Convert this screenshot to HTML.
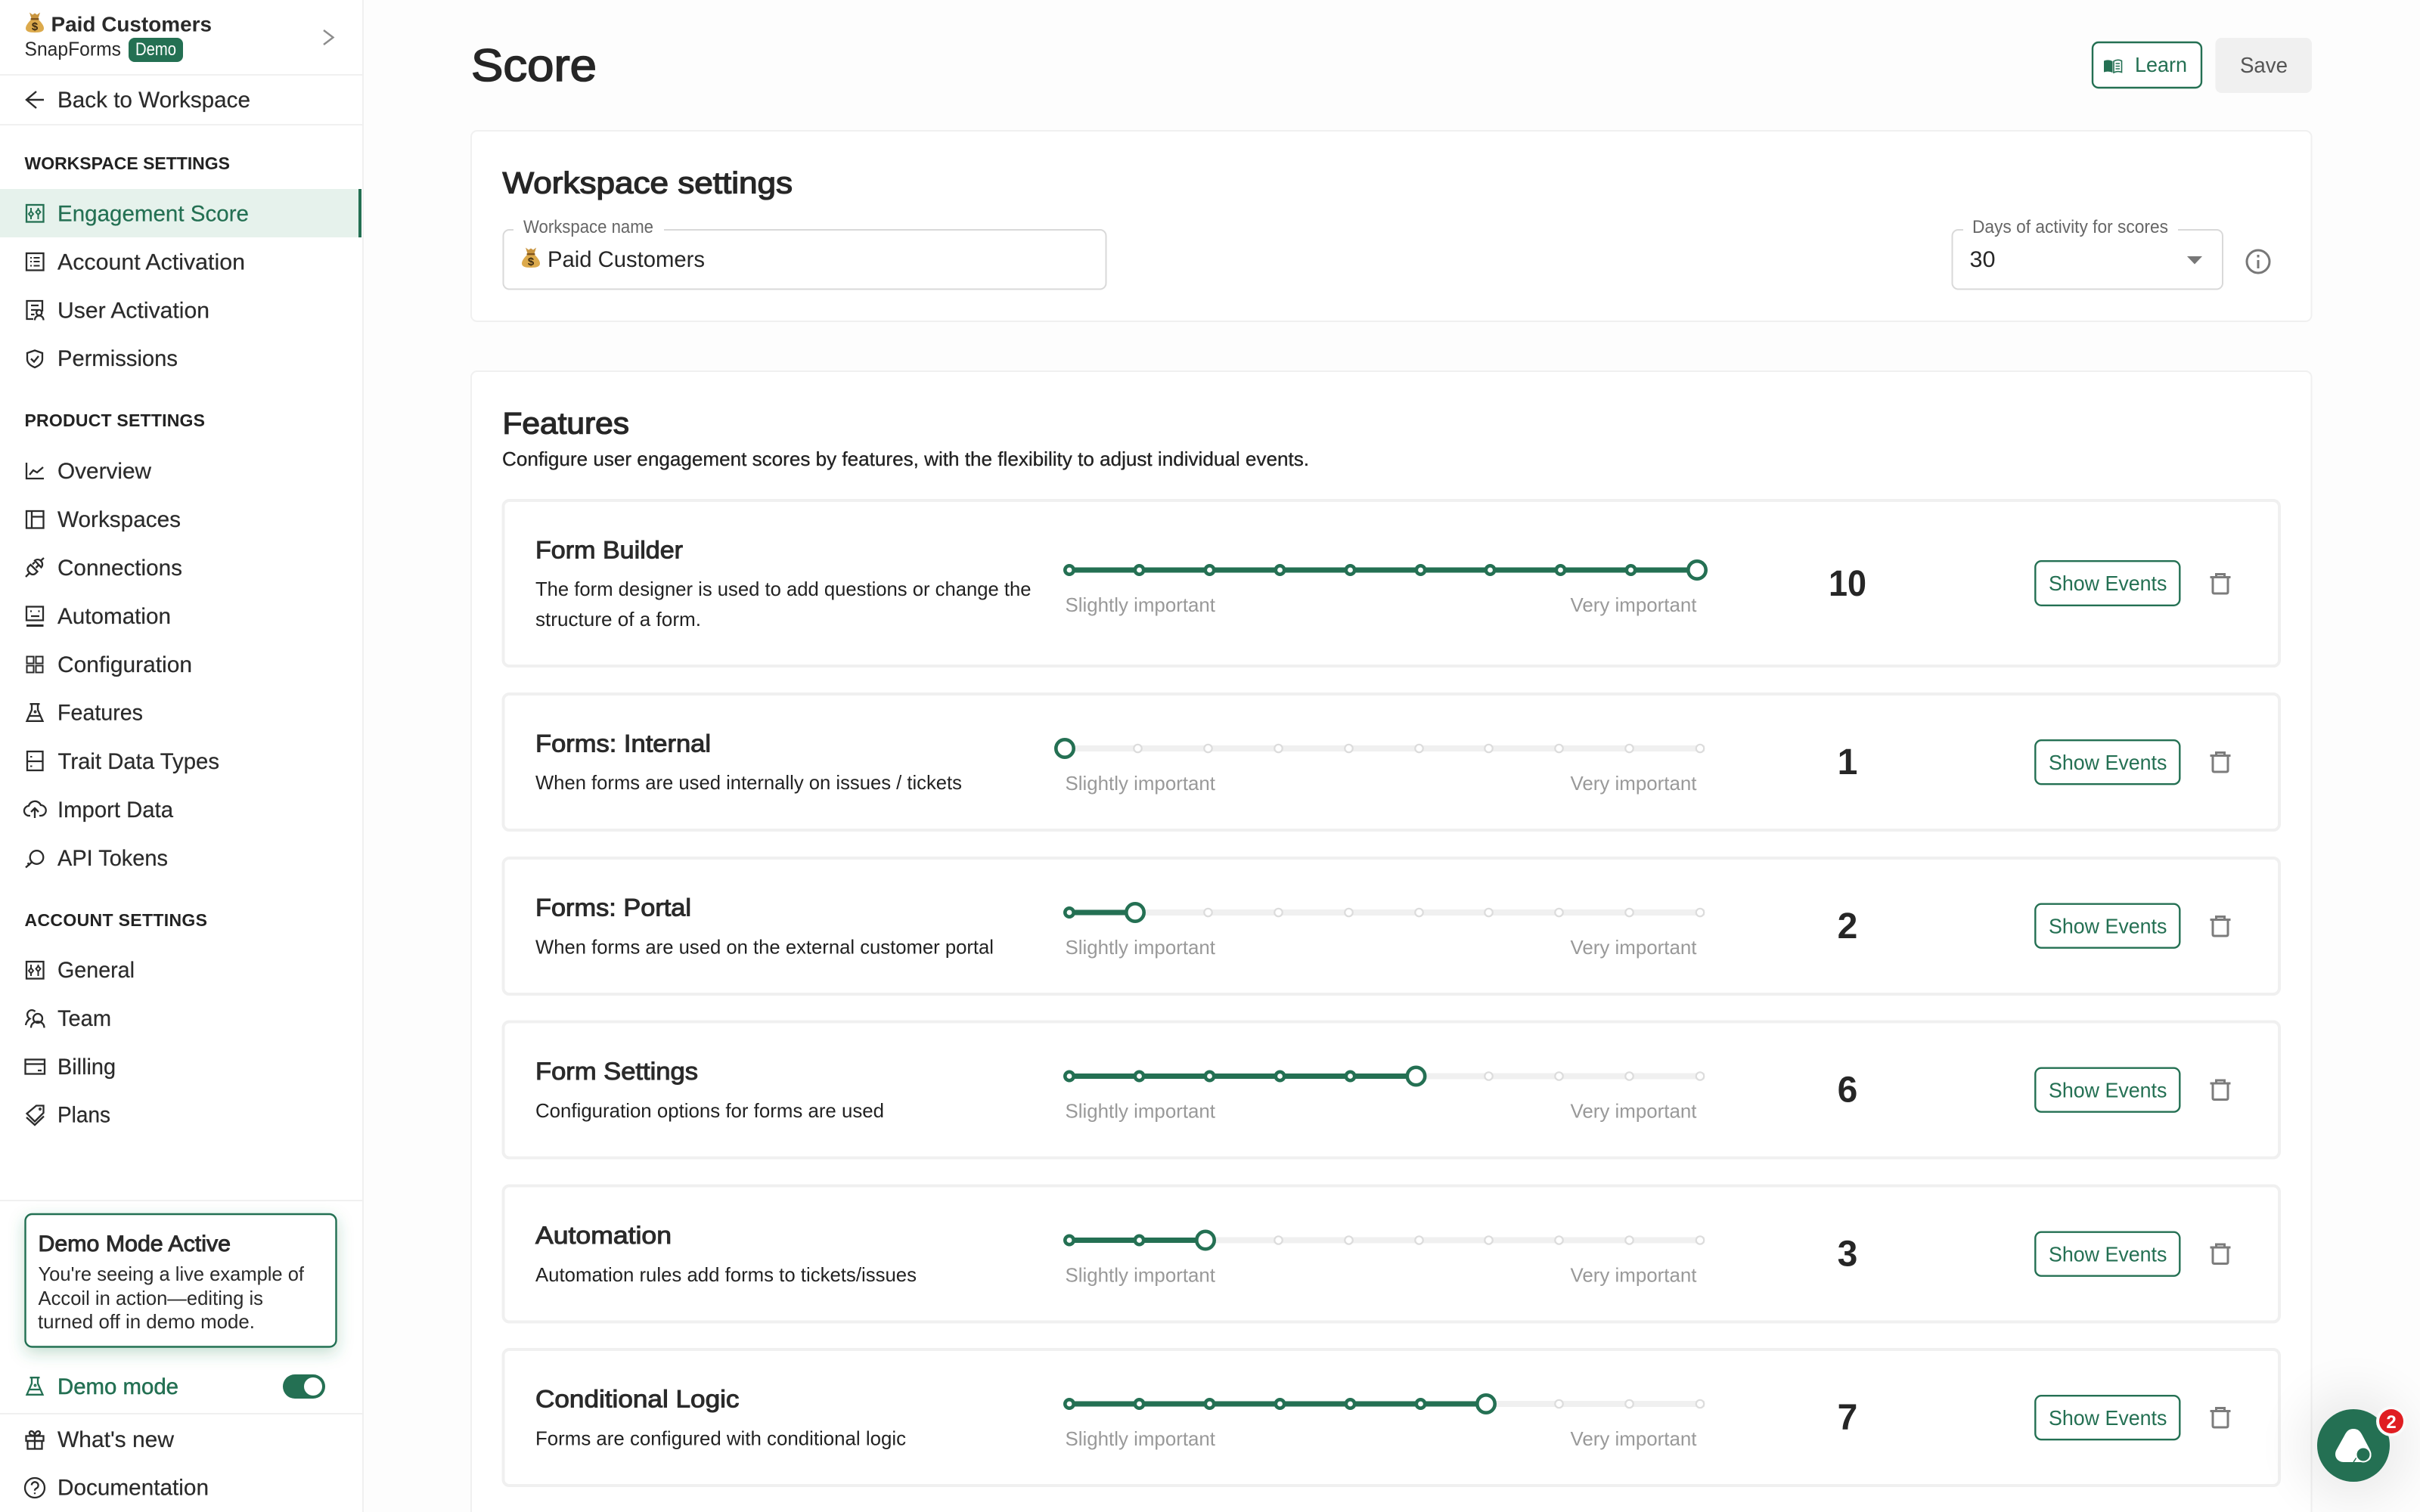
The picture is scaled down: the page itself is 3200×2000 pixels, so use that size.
<!DOCTYPE html>
<html lang="en">
<head>
<meta charset="utf-8">
<title>Score</title>
<style>
html,body{margin:0;padding:0;background:#fdfdfd;width:3200px;height:2000px;overflow:hidden}
svg{display:block}
text{font-family:"Liberation Sans",sans-serif;fill:#2a2a2a;font-size:30px}
.nav{font-size:30px;fill:#2b2b2b;stroke:#2b2b2b;stroke-width:.2px}
.hd{font-size:23px;font-weight:700;fill:#222}
.h1{font-size:60px;fill:#262626;stroke:#262626;stroke-width:1.6px}
.h2{font-size:40px;fill:#262626;stroke:#262626;stroke-width:1.3px}
.tt{font-size:32px;fill:#2a2a2a;stroke:#2a2a2a;stroke-width:1px}
.d{font-size:26px;fill:#222}
.lb{font-size:26px;fill:#999}
.fl{font-size:24px;fill:#666}
.n{font-size:48px;font-weight:700;fill:#262626;text-anchor:middle}
.se{font-size:28px;fill:#247053}
.ic{fill:none;stroke:currentColor;stroke-width:2.3}
.row{fill:#fff;stroke:#f0f0f0;stroke-width:4}
.btn{fill:#fff;stroke:#247053;stroke-width:2.4}
.tr{fill:none;stroke:#7c7c7c;stroke-width:3}
.trk{fill:#f0f0f0}
.act{fill:#247053}
</style>
</head>
<body>
<svg xmlns="http://www.w3.org/2000/svg" width="3200" height="2000" viewBox="0 0 3200 2000">
<defs>
<filter id="b" x="-100%" y="-100%" width="300%" height="300%"><feGaussianBlur stdDeviation="32"/></filter>
<filter id="ds" x="-20%" y="-30%" width="140%" height="170%"><feDropShadow dx="0" dy="7" stdDeviation="10" flood-color="#2a8a5a" flood-opacity=".28"/></filter>
<circle id="da" r="5.7" fill="#fff" stroke="#247053" stroke-width="4.6"/>
<circle id="di" r="5.2" fill="#fff" stroke="#dcdcdc" stroke-width="2.2"/>
<circle id="th" r="11.7" fill="#fff" stroke="#247053" stroke-width="4.6"/>
<g id="trash" class="tr"><path d="M0 5.5H27"/><path d="M8 5V1.5H19V5"/><path d="M3.5 6V25Q3.5 27 5.5 27H21.5Q23.5 27 23.5 25V6"/></g>
<g id="eq" class="ic"><rect x="35" y="271" width="22.5" height="22.5"/><path d="M41 275V279M41 287V290M50.5 275V277M50.5 284V290" stroke-width="2"/><path d="M41 279.5L44 283L41 286.5L38 283ZM50.5 277L53.5 280.5L50.5 284L47.5 280.5Z" stroke-width="2"/></g>
<g id="flask" class="ic"><path d="M39.5 1.2H52.5M42 1.2V9L35.5 23.8H56.5L50 9V1.2"/><path d="M38.5 17H53.5"/><circle cx="46.5" cy="11.5" r=".8"/></g>
<g id="bag">
<path d="M6 9C2 13 -1 17 -1 20.500C-1 24.500 3 26 11 26C19 26 23 24.500 23 20.500C23 17 20 13 16 9Z" fill="#dcaa4c"/>
<path d="M4 -0.500L8 2.500L11 0.500L14 2.500L18 -0.500L15.500 7.500H6.500Z" fill="#c9953f"/>
<rect x="5.500" y="7" width="11" height="2.400" rx="1" fill="#80561f"/>
</g>
<g id="inact">
<use href="#di" x="1597.5"/><use href="#di" x="1690.5"/><use href="#di" x="1783.5"/><use href="#di" x="1876.5"/><use href="#di" x="1968.5"/><use href="#di" x="2061.5"/><use href="#di" x="2154.5"/><use href="#di" x="2248"/>
</g>
</defs>

<!-- main background -->
<rect x="0" y="0" width="3200" height="2000" fill="#fdfdfd"/>

<!-- sidebar -->
<rect x="0" y="0" width="479" height="2000" fill="#fff"/>
<rect x="479" y="0" width="2" height="2000" fill="#f0f0f0"/>

<g transform="translate(35,17)">
<use href="#bag"/>
<text x="11" y="23" text-anchor="middle" style="font-size:15px;font-weight:700;fill:#3d2b10">$</text>
</g>
<text x="67.500" y="41.500" textLength="212.500" lengthAdjust="spacingAndGlyphs" style="font-size:28px;font-weight:700;fill:#2a2a2a">Paid Customers</text>
<text x="32.500" y="73.500" textLength="127.500" lengthAdjust="spacingAndGlyphs" style="font-size:26px;fill:#2a2a2a">SnapForms</text>
<rect x="170" y="50" width="72" height="32" rx="8" fill="#247053"/>
<text x="179" y="73" textLength="54" lengthAdjust="spacingAndGlyphs" style="font-size:24px;fill:#fff">Demo</text>
<path d="M428 40L440.500 49.500L428 59" fill="none" stroke="#8c8c8c" stroke-width="2.400"/>
<rect x="0" y="98" width="479" height="2" fill="#f0f0f0"/>
<path d="M48 121L35 132L48 143M35 132H58" fill="none" stroke="#2b2b2b" stroke-width="2.400"/>
<text class="nav" x="76" y="142" textLength="255" lengthAdjust="spacingAndGlyphs">Back to Workspace</text>
<rect x="0" y="164" width="479" height="2" fill="#f0f0f0"/>

<text class="hd" x="32.500" y="224" textLength="271.500" lengthAdjust="spacing">WORKSPACE SETTINGS</text>

<rect x="0" y="250" width="478" height="64" fill="#e6f2ec"/>
<rect x="474" y="250" width="4" height="64" fill="#247053"/>
<g style="color:#247053"><use href="#eq"/></g>
<text class="nav" x="76" y="292.500" textLength="253" lengthAdjust="spacingAndGlyphs" style="fill:#247053;stroke:#247053">Engagement Score</text>

<g class="ic" style="color:#2b2b2b">
<rect x="35" y="335" width="22.500" height="22.500"/>
<path d="M40 341H42M40 346H42M40 351.500H42M44.500 341H52.500M44.500 346H52.500M44.500 351.500H52.500" stroke-width="2"/>
<path d="M56 412V398H35.500V422H44M41 404H51M41 410H51M41 416H45.500"/>
<circle cx="51.700" cy="413.500" r="3.600"/><path d="M46 423.500C46 415.500 57.500 415.500 57.500 423.500"/>
<path d="M46 463.500L56 467V475C56 481 51 484 46 486C41 484 36 481 36 475V467Z"/><path d="M41 474.500L45 478.500L51 471"/>
<path d="M35 612V633H58M39 628L44 622L49 625L57 618"/>
<rect x="35" y="676" width="22.500" height="22.500"/><path d="M42 676V698M42 683.500H57.500"/>
<path d="M34 763L38.500 758.500M53 742.500L58 738M40.500 747L49.500 756L47 758.500A5 5 0 0 1 40 758.500L38 756.500A5 5 0 0 1 38 749.500ZM46 741.500L54.500 750.500A6 6 0 0 0 54.500 742.500L53 741A6 6 0 0 0 46 741.500ZM43 746.500L46 743.500M47.500 751L50.500 748"/>
<rect x="35" y="802.500" width="22" height="18"/><path d="M40 808.500H42M50.500 808.500H52.500M41 815H52"/><path d="M35 827.500H57.500" stroke-width="3"/>
<g stroke-width="2"><rect x="35.500" y="868.500" width="9" height="9"/><rect x="47.500" y="868.500" width="9" height="9"/><rect x="35.500" y="880.500" width="9" height="9"/><rect x="47.500" y="880.500" width="9" height="9"/></g>
<rect x="36" y="994" width="20.500" height="25"/><path d="M36 1007H56.500"/><path d="M40 1001H42.500M40 1013.500H42.500" stroke-width="2"/>
<path d="M40 1079H39A6.500 6.500 0 0 1 38 1066A8.500 8.500 0 0 1 54 1065A7 7 0 0 1 53.500 1079H52M46 1082V1069M41 1074L46 1069L51 1074"/>
<circle cx="48.500" cy="1134" r="8.800"/><path d="M42 1140.500L34 1147.500M36.500 1141.500L39.500 1144.500"/>
<use href="#eq" y="1001"/>
<circle cx="50" cy="1347" r="6"/><path d="M41 1359.500C41 1348.500 58.500 1348.500 58.500 1359.500M46.500 1338A6 6 0 1 0 39.500 1347.500C36.500 1349.500 34.500 1352.500 34 1356"/>
<rect x="33.500" y="1401.500" width="25.500" height="19"/><path d="M33.500 1407.500H59"/><path d="M50 1416H55"/>
<path d="M48 1462.500H57.500V1472L46 1483.500L35.500 1473ZM35 1478L46 1488L58 1476.500"/><circle cx="53" cy="1467" r=".8"/>
</g>

<text class="nav" x="76" y="356.500" textLength="248" lengthAdjust="spacingAndGlyphs">Account Activation</text>
<text class="nav" x="76" y="420.500" textLength="201" lengthAdjust="spacingAndGlyphs">User Activation</text>
<text class="nav" x="76" y="484" textLength="159" lengthAdjust="spacingAndGlyphs">Permissions</text>

<text class="hd" x="32.500" y="564" textLength="238.500" lengthAdjust="spacing">PRODUCT SETTINGS</text>
<text class="nav" x="76" y="633" textLength="124" lengthAdjust="spacingAndGlyphs">Overview</text>
<text class="nav" x="76" y="697" textLength="163" lengthAdjust="spacingAndGlyphs">Workspaces</text>
<text class="nav" x="76" y="761" textLength="165" lengthAdjust="spacingAndGlyphs">Connections</text>
<text class="nav" x="76" y="825" textLength="150" lengthAdjust="spacingAndGlyphs">Automation</text>
<text class="nav" x="76" y="889" textLength="178" lengthAdjust="spacingAndGlyphs">Configuration</text>
<g style="color:#2b2b2b"><use href="#flask" y="930"/></g>
<text class="nav" x="76" y="952.500" textLength="113" lengthAdjust="spacingAndGlyphs">Features</text>
<text class="nav" x="76.500" y="1017" textLength="213.500" lengthAdjust="spacingAndGlyphs">Trait Data Types</text>
<text class="nav" x="76" y="1081" textLength="153" lengthAdjust="spacingAndGlyphs">Import Data</text>
<text class="nav" x="76" y="1145" textLength="146" lengthAdjust="spacingAndGlyphs">API Tokens</text>

<text class="hd" x="32.500" y="1225" textLength="241.500" lengthAdjust="spacing">ACCOUNT SETTINGS</text>
<text class="nav" x="76" y="1293" textLength="102" lengthAdjust="spacingAndGlyphs">General</text>
<text class="nav" x="76" y="1357" textLength="71" lengthAdjust="spacingAndGlyphs">Team</text>
<text class="nav" x="76" y="1421" textLength="77" lengthAdjust="spacingAndGlyphs">Billing</text>
<text class="nav" x="76" y="1484.500" textLength="70" lengthAdjust="spacingAndGlyphs">Plans</text>

<rect x="0" y="1587" width="479" height="2" fill="#f0f0f0"/>
<rect x="33.500" y="1606" width="411" height="175.500" rx="9" fill="#fff" stroke="#247053" stroke-width="2.400" filter="url(#ds)"/>
<text x="50.500" y="1655" textLength="254.500" lengthAdjust="spacingAndGlyphs" style="font-size:30px;fill:#2a2a2a;stroke:#2a2a2a;stroke-width:1px">Demo Mode Active</text>
<text class="d" x="50.500" y="1694" textLength="351.500" lengthAdjust="spacingAndGlyphs" style="fill:#2b2b2b">You're seeing a live example of</text>
<text class="d" x="50.500" y="1726" textLength="297.500" lengthAdjust="spacingAndGlyphs" style="fill:#2b2b2b">Accoil in action—editing is</text>
<text class="d" x="50" y="1757" textLength="287" lengthAdjust="spacingAndGlyphs" style="fill:#2b2b2b">turned off in demo mode.</text>

<g style="color:#247053"><use href="#flask" y="1821"/></g>
<text x="76" y="1844" textLength="160" lengthAdjust="spacingAndGlyphs" style="font-size:30px;fill:#247053;stroke:#247053;stroke-width:.5px">Demo mode</text>
<rect x="374" y="1818" width="56" height="32" rx="16" fill="#247053"/>
<circle cx="414" cy="1834" r="12" fill="#fff"/>
<rect x="0" y="1869" width="479" height="2" fill="#f0f0f0"/>

<g class="ic" style="color:#2b2b2b">
<rect x="34.500" y="1899.500" width="23" height="6.500"/><rect x="36.500" y="1906" width="19" height="10.500"/><path d="M46 1899.500V1916.500"/>
<path d="M46 1899C42 1899 39 1898 39 1895.500C39 1892 45 1891.500 46 1899C47 1891.500 53 1892 53 1895.500C53 1898 50 1899 46 1899Z"/>
<circle cx="46" cy="1968" r="13"/><path d="M41.800 1964.500A4.400 4.400 0 1 1 48.500 1968.500C46.800 1969.500 46 1970 46 1971.800"/><path d="M46 1974.300V1976.300"/>
</g>
<text class="nav" x="76" y="1914" textLength="154" lengthAdjust="spacingAndGlyphs">What's new</text>
<text class="nav" x="76" y="1977.500" textLength="200" lengthAdjust="spacingAndGlyphs">Documentation</text>

<!-- page header -->
<text class="h1" x="623" y="107" textLength="166" lengthAdjust="spacingAndGlyphs">Score</text>
<rect x="2767" y="56" width="144" height="60" rx="8" class="btn"/>
<path d="M2782 80.500Q2788 78 2793.500 81V96Q2788 93.500 2782 95.500Z" fill="#247053"/>
<path d="M2795 81Q2800 78 2805.500 80.500V95.500Q2800 93.500 2795 96ZM2797.500 84H2803M2797.500 87.500H2803M2797.500 91H2803" fill="none" stroke="#247053" stroke-width="1.600"/>
<text class="se" x="2823" y="95" textLength="69" lengthAdjust="spacingAndGlyphs" style="font-size:28px">Learn</text>
<rect x="2929.500" y="50" width="127.500" height="73" rx="8" fill="#f0f0f0"/>
<text x="2962" y="96" textLength="63" lengthAdjust="spacingAndGlyphs" style="font-size:29px;fill:#555">Save</text>

<!-- workspace settings card -->
<rect x="623" y="173" width="2433.500" height="252" rx="8" fill="#fff" stroke="#f0f0f0" stroke-width="2"/>
<text class="h2" x="664.500" y="255.500" textLength="383.500" lengthAdjust="spacingAndGlyphs">Workspace settings</text>

<rect x="665.500" y="304" width="797" height="78.500" rx="8" fill="#fff" stroke="#d9d9d9" stroke-width="2"/>
<rect x="679" y="298" width="199" height="10" fill="#fff"/>
<text class="fl" x="692" y="308" textLength="172" lengthAdjust="spacingAndGlyphs">Workspace name</text>
<g transform="translate(691,328)">
<use href="#bag"/>
<text x="11" y="23" text-anchor="middle" style="font-size:15px;font-weight:700;fill:#3d2b10">$</text>
</g>
<text x="724" y="353" textLength="208" lengthAdjust="spacingAndGlyphs" style="font-size:30px;fill:#262626">Paid Customers</text>

<rect x="2581.500" y="304" width="357.500" height="78.500" rx="8" fill="#fff" stroke="#d9d9d9" stroke-width="2"/>
<rect x="2596" y="298" width="284" height="10" fill="#fff"/>
<text class="fl" x="2608" y="308" textLength="259" lengthAdjust="spacingAndGlyphs">Days of activity for scores</text>
<text x="2604.500" y="353" textLength="34" lengthAdjust="spacingAndGlyphs" style="font-size:30px;fill:#262626">30</text>
<path d="M2892 339H2912L2902 349.500Z" fill="#777"/>
<circle cx="2986" cy="346" r="15" fill="none" stroke="#777" stroke-width="3"/>
<path d="M2986 344V355M2986 337V340.500" stroke="#777" stroke-width="3" fill="none"/>

<!-- features card -->
<rect x="623" y="491" width="2433.500" height="1530" rx="8" fill="#fff" stroke="#f0f0f0" stroke-width="2"/>
<text class="h2" x="664.500" y="573.500" textLength="167.500" lengthAdjust="spacingAndGlyphs">Features</text>
<text x="664" y="616" textLength="1067" lengthAdjust="spacingAndGlyphs" style="font-size:26px;fill:#222;stroke:#222;stroke-width:.3px">Configure user engagement scores by features, with the flexibility to adjust individual events.</text>

<!-- row 1 -->
<g transform="translate(0,660)">
<rect class="row" x="665.500" y="2" width="2348.500" height="219" rx="8"/>
<text class="tt" x="708" y="78.500" textLength="195" lengthAdjust="spacingAndGlyphs">Form Builder</text>
<text class="d" x="708" y="128" textLength="655.500" lengthAdjust="spacingAndGlyphs">The form designer is used to add questions or change the</text>
<text class="d" x="708" y="168" textLength="219" lengthAdjust="spacingAndGlyphs">structure of a form.</text>
<rect class="act" x="1414" y="90.500" width="830" height="7"/>
<g transform="translate(0,94)">
<use href="#da" x="1414"/><use href="#da" x="1506.500"/><use href="#da" x="1599.500"/><use href="#da" x="1692.500"/><use href="#da" x="1785.500"/><use href="#da" x="1878.500"/><use href="#da" x="1970.500"/><use href="#da" x="2063.500"/><use href="#da" x="2156.500"/><use href="#th" x="2244"/>
</g>
<text class="lb" x="1408.500" y="149" textLength="198.500" lengthAdjust="spacingAndGlyphs">Slightly important</text>
<text class="lb" x="2076.500" y="149" textLength="167" lengthAdjust="spacingAndGlyphs">Very important</text>
<text class="n" x="2418" y="128" textLength="50" lengthAdjust="spacingAndGlyphs" style="text-anchor:start">10</text>
<rect class="btn" x="2691.300" y="82.200" width="191" height="58.600" rx="8"/>
<text class="se" x="2709" y="121" textLength="156.400" lengthAdjust="spacingAndGlyphs">Show Events</text>
<use href="#trash" x="2922.500" y="98"/>
</g>

<!-- row 2 -->
<g transform="translate(0,916)">
<rect class="row" x="665.500" y="2" width="2348.500" height="180" rx="8"/>
<text class="tt" x="708" y="78.500" textLength="232" lengthAdjust="spacingAndGlyphs">Forms: Internal</text>
<text class="d" x="708" y="128" textLength="564" lengthAdjust="spacingAndGlyphs">When forms are used internally on issues / tickets</text>
<rect class="trk" x="1408" y="70" width="846" height="8"/>
<g transform="translate(0,74)"><use href="#di" x="1504.500"/><use href="#inact"/><use href="#th" x="1408"/></g>
<text class="lb" x="1408.500" y="129" textLength="198.500" lengthAdjust="spacingAndGlyphs">Slightly important</text>
<text class="lb" x="2076.500" y="129" textLength="167" lengthAdjust="spacingAndGlyphs">Very important</text>
<text class="n" x="2443" y="108">1</text>
<rect class="btn" x="2691.300" y="63.200" width="191" height="58" rx="8"/>
<text class="se" x="2709" y="102" textLength="156.400" lengthAdjust="spacingAndGlyphs">Show Events</text>
<use href="#trash" x="2922.500" y="78"/>
</g>

<!-- row 3 -->
<g transform="translate(0,1133)">
<rect class="row" x="665.500" y="2" width="2348.500" height="180" rx="8"/>
<text class="tt" x="708" y="78.500" textLength="206" lengthAdjust="spacingAndGlyphs">Forms: Portal</text>
<text class="d" x="708" y="128.500" textLength="606" lengthAdjust="spacingAndGlyphs">When forms are used on the external customer portal</text>
<rect class="trk" x="1408" y="70" width="846" height="8"/>
<rect class="act" x="1414" y="70.500" width="87" height="7"/>
<g transform="translate(0,74)"><use href="#inact"/><use href="#da" x="1414"/><use href="#th" x="1501"/></g>
<text class="lb" x="1408.500" y="129" textLength="198.500" lengthAdjust="spacingAndGlyphs">Slightly important</text>
<text class="lb" x="2076.500" y="129" textLength="167" lengthAdjust="spacingAndGlyphs">Very important</text>
<text class="n" x="2443" y="108">2</text>
<rect class="btn" x="2691.300" y="62.700" width="191" height="58" rx="8"/>
<text class="se" x="2709" y="101.500" textLength="156.400" lengthAdjust="spacingAndGlyphs">Show Events</text>
<use href="#trash" x="2922.500" y="78"/>
</g>

<!-- row 4 -->
<g transform="translate(0,1349.500)">
<rect class="row" x="665.500" y="2" width="2348.500" height="180" rx="8"/>
<text class="tt" x="708" y="78.500" textLength="215" lengthAdjust="spacingAndGlyphs">Form Settings</text>
<text class="d" x="708" y="128.500" textLength="461" lengthAdjust="spacingAndGlyphs">Configuration options for forms are used</text>
<rect class="trk" x="1408" y="70" width="846" height="8"/>
<rect class="act" x="1414" y="70.500" width="458" height="7"/>
<g transform="translate(0,74)"><use href="#di" x="1968.500"/><use href="#di" x="2061.500"/><use href="#di" x="2154.500"/><use href="#di" x="2248"/><use href="#da" x="1414"/><use href="#da" x="1506.500"/><use href="#da" x="1599.500"/><use href="#da" x="1692.500"/><use href="#da" x="1785.500"/><use href="#th" x="1872.500"/></g>
<text class="lb" x="1408.500" y="129" textLength="198.500" lengthAdjust="spacingAndGlyphs">Slightly important</text>
<text class="lb" x="2076.500" y="129" textLength="167" lengthAdjust="spacingAndGlyphs">Very important</text>
<text class="n" x="2443" y="108">6</text>
<rect class="btn" x="2691.300" y="63.200" width="191" height="58" rx="8"/>
<text class="se" x="2709" y="102" textLength="156.400" lengthAdjust="spacingAndGlyphs">Show Events</text>
<use href="#trash" x="2922.500" y="78"/>
</g>

<!-- row 5 -->
<g transform="translate(0,1566.500)">
<rect class="row" x="665.500" y="2" width="2348.500" height="180" rx="8"/>
<text class="tt" x="708" y="78.500" textLength="180" lengthAdjust="spacingAndGlyphs">Automation</text>
<text class="d" x="708" y="128.500" textLength="504" lengthAdjust="spacingAndGlyphs">Automation rules add forms to tickets/issues</text>
<rect class="trk" x="1408" y="70" width="846" height="8"/>
<rect class="act" x="1414" y="70.500" width="180" height="7"/>
<g transform="translate(0,74)"><use href="#di" x="1690.500"/><use href="#di" x="1783.500"/><use href="#di" x="1876.500"/><use href="#di" x="1968.500"/><use href="#di" x="2061.500"/><use href="#di" x="2154.500"/><use href="#di" x="2248"/><use href="#da" x="1414"/><use href="#da" x="1506.500"/><use href="#th" x="1594"/></g>
<text class="lb" x="1408.500" y="129" textLength="198.500" lengthAdjust="spacingAndGlyphs">Slightly important</text>
<text class="lb" x="2076.500" y="129" textLength="167" lengthAdjust="spacingAndGlyphs">Very important</text>
<text class="n" x="2443" y="108">3</text>
<rect class="btn" x="2691.300" y="63.200" width="191" height="58" rx="8"/>
<text class="se" x="2709" y="102" textLength="156.400" lengthAdjust="spacingAndGlyphs">Show Events</text>
<use href="#trash" x="2922.500" y="78"/>
</g>

<!-- row 6 -->
<g transform="translate(0,1783)">
<rect class="row" x="665.500" y="2" width="2348.500" height="180" rx="8"/>
<text class="tt" x="708" y="78.500" textLength="269.500" lengthAdjust="spacingAndGlyphs">Conditional Logic</text>
<text class="d" x="708" y="128.500" textLength="490" lengthAdjust="spacingAndGlyphs">Forms are configured with conditional logic</text>
<rect class="trk" x="1408" y="70" width="846" height="8"/>
<rect class="act" x="1414" y="70.500" width="551" height="7"/>
<g transform="translate(0,74)"><use href="#di" x="2061.500"/><use href="#di" x="2154.500"/><use href="#di" x="2248"/><use href="#da" x="1414"/><use href="#da" x="1506.500"/><use href="#da" x="1599.500"/><use href="#da" x="1692.500"/><use href="#da" x="1785.500"/><use href="#da" x="1878.500"/><use href="#th" x="1965"/></g>
<text class="lb" x="1408.500" y="129" textLength="198.500" lengthAdjust="spacingAndGlyphs">Slightly important</text>
<text class="lb" x="2076.500" y="129" textLength="167" lengthAdjust="spacingAndGlyphs">Very important</text>
<text class="n" x="2443" y="108">7</text>
<rect class="btn" x="2691.300" y="63.200" width="191" height="58" rx="8"/>
<text class="se" x="2709" y="102" textLength="156.400" lengthAdjust="spacingAndGlyphs">Show Events</text>
<use href="#trash" x="2922.500" y="78"/>
</g>

<!-- chat bubble -->
<circle cx="3112" cy="1912" r="72" fill="#000" opacity=".07" filter="url(#b)"/>
<circle cx="3112" cy="1912" r="48" fill="#247053"/>
<path d="M3112 1890C3118 1890 3121 1893 3124 1899L3134 1918C3138 1927 3134 1934 3125 1934H3099C3090 1934 3085 1925 3090 1917L3100 1899C3103 1893 3106 1890 3112 1890Z" fill="#fff"/>
<path d="M3112 1934L3118 1925" stroke="#247053" stroke-width="1.500" fill="none"/>
<circle cx="3125" cy="1924" r="9.500" fill="#247053" stroke="#fff" stroke-width="2"/>
<circle cx="3162" cy="1880" r="20" fill="#fafafa"/>
<circle cx="3162" cy="1880" r="16" fill="#e01e22"/>
<text x="3162" y="1889" text-anchor="middle" style="font-size:24px;font-weight:700;fill:#fff">2</text>
</svg>
</body>
</html>
